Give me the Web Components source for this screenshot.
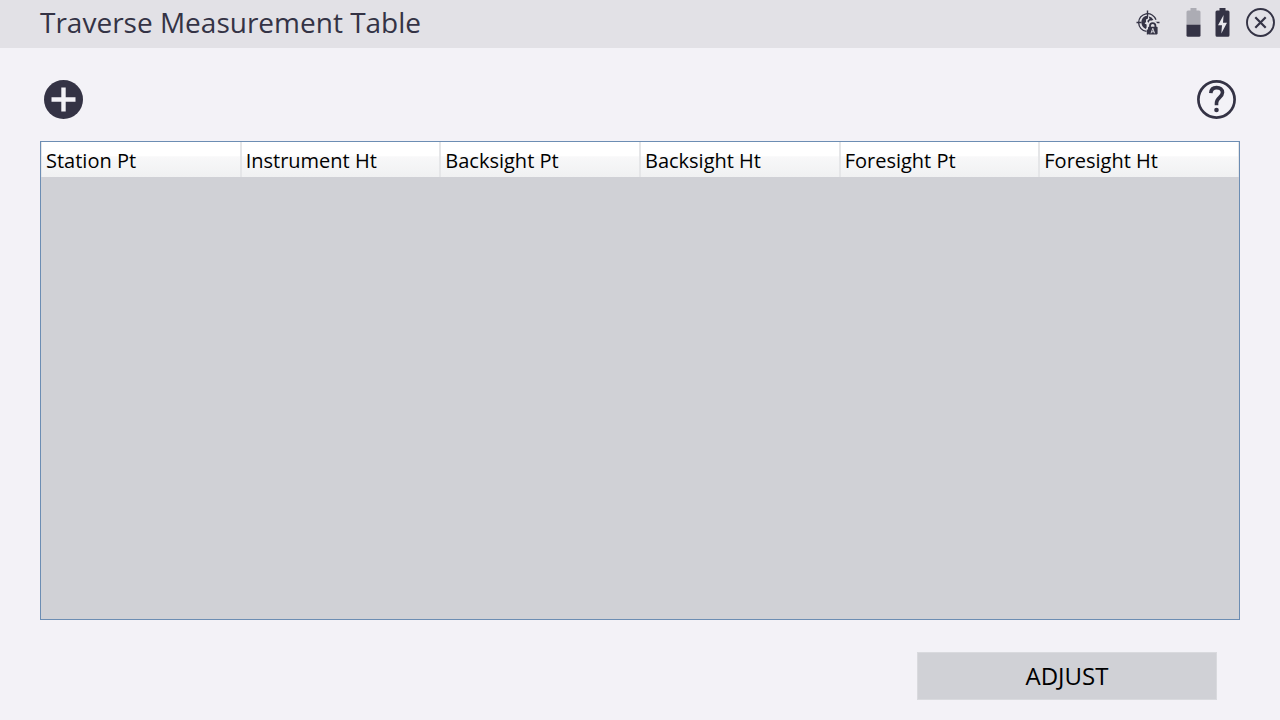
<!DOCTYPE html>
<html lang="en">
<head>
<meta charset="utf-8">
<meta name="viewport" content="width=device-width, initial-scale=1">
<title>Traverse Measurement Table</title>
<style>
  body {
    margin: 0;
    font-family: "Open Sans", "Noto Sans", sans-serif;
    --ink: #343345;
    --bar: #e2e1e6;
    --page: #f3f2f7;
    --panel: #d0d1d6;
    background: var(--page);
    color: var(--ink);
  }
</style>
</head>
<body>
<traverse-page></traverse-page>

<template id="title-bar">
  <style>
    :host { display: block; background: var(--bar); }
    header { display: flex; align-items: flex-start; justify-content: space-between; min-height: 48px; padding: 2px 4px 0 40px; box-sizing: border-box; }
    h1 { margin: 0; font-size: 28px; line-height: 40px; font-weight: 400; white-space: nowrap; }
    .status { display: flex; align-items: center; padding-top: 5px; }
  </style>
  <header>
    <h1><slot></slot></h1>
    <div class="status"><slot name="status"></slot></div>
  </header>
</template>

<template id="icon-button">
  <style>
    :host { display: block; }
    button { display: block; padding: 0; border: 0; background: none; color: inherit; cursor: pointer; }
    button:focus-visible { outline: 2px solid #5b8ec2; }
    ::slotted(svg) { display: block; }
  </style>
  <button type="button"><slot></slot></button>
</template>

<template id="data-table">
  <style>
    :host { display: block; box-sizing: border-box; border: 1px solid #6c8db3; background: var(--panel); overflow: auto; }
    table { width: 100%; border-collapse: separate; border-spacing: 0; table-layout: fixed; color: #000; }
    th {
      box-sizing: border-box; height: 35px; padding: 3px 4px 0; text-align: left;
      font-size: 20px; line-height: 28px; font-weight: 400; white-space: nowrap;
      border: 0 solid #e5e6e8; border-width: 0 1px;
      background: linear-gradient(#fff 0, #fff 40%, #f8f8f9 42%, #f0f1f2 100%);
    }
  </style>
  <table><thead><tr></tr></thead><tbody></tbody></table>
</template>

<template id="action-button">
  <style>
    :host { display: block; }
    button {
      display: block; width: 100%; height: 48px; padding: 0; box-sizing: border-box;
      border: 1px solid #d9dade; background: var(--panel); color: #000;
      font: 24px/32px "Open Sans", "Noto Sans", sans-serif; cursor: pointer;
    }
  </style>
  <button type="button"><slot></slot></button>
</template>

<template id="traverse-page">
  <style>
    :host { display: flex; flex-direction: column; min-height: 100vh; }
    svg { display: block; }
    .target { margin-right: 26px; }
    .level { margin-right: 14px; }
    .charge { margin-right: 15px; }
    main { flex: 1; display: flex; flex-direction: column; padding: 32px 40px 20px; }
    .tools { display: flex; justify-content: space-between; padding: 0 4px; margin-bottom: 22px; }
    data-table { flex: 1; }
    footer { display: flex; justify-content: flex-end; padding: 32px 23px 0; }
    action-button { flex: 0 1 300px; }
  </style>
  <title-bar>
    Traverse Measurement Table
    <svg slot="status" class="target" width="24" height="27" viewBox="0 0 24 27" fill="none" stroke="#343345" role="img" aria-label="Target locked">
      <path d="M20 10.800A8.900 8.900 0 1 0 10.500 22.400" stroke-width="1.300"/>
      <path d="M11.500 1.500v5.500M.5 13.500h5M18.500 13.500H23.500M11.500 20.500v5" stroke-width="1.400"/>
      <path d="M9.500 7C4 9 4 17.500 9.800 20L10.600 18.500V15.500L8.600 14.500L10 13V10.500L12 9.500V7Z" fill="#343345" stroke="none"/>
      <path d="M12.500 7.200Q16 8 17.500 11L15 12L14 11.300L12.500 14L11.200 12L13.500 9.800Z" fill="#343345" stroke="none"/>
      <path d="M13.400 18V16.600a3.300 3.300 0 0 1 6.600 0V18" stroke="#e2e1e6" stroke-width="3.500"/>
      <path d="M14 18.500V16.800a2.700 2.700 0 0 1 5.400 0v1.700" stroke-width="1.800"/>
      <rect x="12" y="17.700" width="9.600" height="7.700" rx=".8" fill="#343345" stroke="none"/>
      <path d="M15 24.300l1.800-5 1.800 5M15.600 22.800h2.400" stroke="#e2e1e6" stroke-width=".9"/>
    </svg>
    <svg slot="status" class="level" width="15" height="31" viewBox="0 0 15 31" role="img" aria-label="Battery half full">
      <path d="M4.500 1h6v2.500H13q1.500 0 1.500 1.500V18H.5V5q0-1.500 1.500-1.500h2.500z" fill="#acacb4"/>
      <path d="M.5 17.700h14v10.500q0 1.500-1.500 1.500H2q-1.500 0-1.500-1.500z" fill="#343345"/>
    </svg>
    <svg slot="status" class="charge" width="15" height="31" viewBox="0 0 15 31" role="img" aria-label="Battery charging">
      <path d="M4.500 1h6v2.500H13q1.500 0 1.500 1.500v23.200q0 1.500-1.500 1.500H2q-1.500 0-1.500-1.500V5q0-1.500 1.500-1.500h2.500z" fill="#343345"/>
      <path d="M8.600 8L3 18.300h4L6.300 26.500L12 15.700H8z" fill="#e9e8ed"/>
    </svg>
    <icon-button slot="status" label="Close">
      <svg width="31" height="31" viewBox="0 0 31 31" fill="none" stroke="#343345" aria-hidden="true">
        <circle cx="15.500" cy="15.500" r="13.500" stroke-width="1.900"/>
        <path d="M10.300 10.300l10.400 10.400M20.700 10.300L10.300 20.700" stroke-width="2.200"/>
      </svg>
    </icon-button>
  </title-bar>
  <main>
    <div class="tools">
      <icon-button label="Add measurement">
        <svg width="39" height="39" viewBox="0 0 39 39" aria-hidden="true">
          <circle cx="19.500" cy="19.500" r="19.500" fill="#343345"/>
          <path d="M19.500 7.500v24M7.500 19.500h24" stroke="#f3f2f7" stroke-width="4.400"/>
        </svg>
      </icon-button>
      <icon-button label="Help">
        <svg width="39" height="39" viewBox="0 0 39 39" fill="none" aria-hidden="true">
          <circle cx="19.500" cy="19.500" r="18.100" stroke="#343345" stroke-width="2.700"/>
          <path d="M13.800 13.200C14 9.300 16.300 7.600 19.600 7.600C23.100 7.600 25.500 9.600 25.500 12.600C25.500 17.200 19.500 17.600 19.500 23V25.200" stroke="#343345" stroke-width="3.600"/>
          <circle cx="19.500" cy="30" r="2.300" fill="#343345"/>
        </svg>
      </icon-button>
    </div>
    <data-table columns="Station Pt|Instrument Ht|Backsight Pt|Backsight Ht|Foresight Pt|Foresight Ht"></data-table>
    <footer><action-button>ADJUST</action-button></footer>
  </main>
</template>

<script>
  class TemplateElement extends HTMLElement {
    constructor() {
      super();
      const template = document.getElementById(this.localName);
      this.attachShadow({ mode: "open" }).append(template.content.cloneNode(true));
    }
  }

  class TitleBar extends TemplateElement {}
  class ActionButton extends TemplateElement {}
  class TraversePage extends TemplateElement {}

  class IconButton extends TemplateElement {
    connectedCallback() {
      this.shadowRoot.querySelector("button").setAttribute("aria-label", this.getAttribute("label"));
    }
  }

  class DataTable extends TemplateElement {
    connectedCallback() {
      const cells = this.getAttribute("columns").split("|").map((name) => {
        const th = document.createElement("th");
        th.scope = "col";
        th.textContent = name;
        return th;
      });
      this.shadowRoot.querySelector("thead tr").replaceChildren(...cells);
    }
  }

  customElements.define("title-bar", TitleBar);
  customElements.define("icon-button", IconButton);
  customElements.define("data-table", DataTable);
  customElements.define("action-button", ActionButton);
  customElements.define("traverse-page", TraversePage);
</script>
</body>
</html>
